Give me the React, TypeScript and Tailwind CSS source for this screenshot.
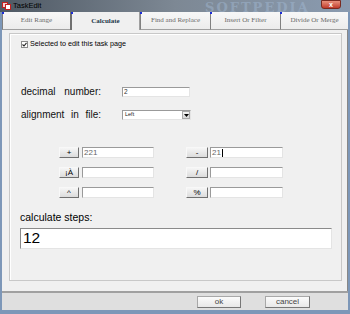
import React from "react";

const tabs = [
  { label: "Edit Range", w: "w-[68px]" },
  { label: "Calculate", w: "w-[70px]", active: true },
  { label: "Find and Replace", w: "w-[70px]" },
  { label: "Insert Or Filter", w: "w-[70px]" },
  { label: "Divide Or Merge", w: "w-[68px]" },
];

function SmallButton({ label, w }: { label: string; w: string }) {
  return (
    <div
      className={`${w} h-[11px] flex items-center justify-center border border-t-[#f8f8f8] border-l-[#f8f8f8] border-r-[#707070] border-b-[#707070] bg-gradient-to-b from-[#f6f6f6] to-[#dcdcdc] text-[8px] leading-none text-black`}
    >
      {label}
    </div>
  );
}

function Field({ value, w, caret }: { value?: string; w: string; caret?: boolean }) {
  return (
    <div
      className={`${w} h-[11px] flex items-center bg-white border border-t-[#9a9a9a] border-l-[#9a9a9a] border-r-[#e4e4e4] border-b-[#e4e4e4] pl-[1px] text-[8px] leading-none text-[#666]`}
    >
      {value}
      {caret && <div className="ml-[1px] w-px h-[8px] bg-black" />}
    </div>
  );
}

function CalcRow({
  left,
  leftValue,
  right,
  rightValue,
}: {
  left: string;
  leftValue?: string;
  right: string;
  rightValue?: string;
}) {
  return (
    <div className="flex items-center h-[11px]">
      <div className="ml-[39px]">
        <SmallButton label={left} w="w-[20px]" />
      </div>
      <div className="ml-[3px]">
        <Field value={leftValue} w="w-[72px]" />
      </div>
      <div className="ml-[32px]">
        <SmallButton label={right} w="w-[22px]" />
      </div>
      <div className="ml-[2px]">
        <Field value={rightValue} w="w-[73px]" caret={!!rightValue} />
      </div>
    </div>
  );
}

export default function App() {
  return (
    <div className="w-[350px] h-[314px] flex flex-col bg-[#7d97b8] font-['Liberation_Sans',Arial,sans-serif] overflow-hidden">
      {/* title bar */}
      <div className="relative h-[12px] flex items-center bg-gradient-to-r from-[#4f5964] via-[#7d8894] to-[#8a9bb0]">
        <div className="ml-[2px] w-[9px] h-[8px] relative">
          <div className="absolute left-0 top-0 w-[6px] h-[6px] border border-[#c02020] bg-[#f6d0d0]" />
          <div className="absolute left-[3px] top-[2px] w-[6px] h-[6px] border border-[#c02020] bg-white" />
        </div>
        <span className="ml-[2px] text-[7.5px] leading-none text-black">TaskEdit</span>
        <span className="absolute left-[205px] top-[-2px] text-[13px] font-bold tracking-[2px] text-[#a8c0dc] opacity-40 font-['DejaVu_Serif',serif]">
          SOFTPEDIA
        </span>
        <div className="absolute right-[9px] top-0 w-[20px] h-[9px] rounded-b-[3px] bg-gradient-to-b from-[#e9907c] to-[#c0392b] border border-[#7a2a20] flex items-center justify-center text-white text-[7px] font-bold leading-none">
          x
        </div>
      </div>

      {/* window body */}
      <div className="flex-1 mx-[2px] flex flex-col bg-[#f0f0f0]">
        {/* tabs */}
        <div className="h-[18px] flex bg-[#f0f0f0]">
          {tabs.map((t) => (
            <div
              key={t.label}
              className={`${t.w} relative flex items-center justify-center font-['Liberation_Serif',serif] text-[7px] leading-none ${
                t.active
                  ? "font-bold text-[#23384a] border-l-2 border-l-[#707070] border-r border-r-[#a0a0a0] bg-[#f0f0f0]"
                  : "text-[#6a6a6a] border-l border-l-[#808080] border-b border-b-[#a0a0a0] bg-gradient-to-b from-[#f7f7f7] to-[#ececec]"
              }`}
            >
              <div className="absolute left-[-1px] top-0 w-[2px] h-[2px] bg-[#1c2cd8]" />
              {t.label}
            </div>
          ))}
        </div>

        {/* tab page */}
        <div className="flex-1 border-r border-r-[#888] pt-[3px] pl-[7px]">
          <div className="w-[333px] h-[248px] border border-[#c8c8c8] shadow-[inset_1px_1px_0_#fff] flex flex-col pl-[10px]">
            <div className="mt-[6px] ml-[1px] flex items-center h-[8px]">
              <div className="w-[7px] h-[7px] border border-[#8a8a8a] bg-white flex items-center justify-center">
                <svg width="5" height="5" viewBox="0 0 5 5">
                  <path d="M0.5 2.5 L2 4 L4.5 0.8" stroke="#222" strokeWidth="1.1" fill="none" />
                </svg>
              </div>
              <span className="ml-[2px] text-[7.2px] leading-none text-black">
                Selected to edit this task page
              </span>
            </div>

            <div className="mt-[39px] flex items-center h-[10px]">
              <div className="w-[80px] ml-[1px] flex justify-between text-[10px] leading-none text-[#111]">
                <span>decimal</span>
                <span>number:</span>
              </div>
              <div className="ml-[21px] w-[68px] h-[10px] bg-white border border-t-[#9a9a9a] border-l-[#9a9a9a] border-r-[#e4e4e4] border-b-[#e4e4e4] pl-[1px] text-[6.5px] leading-[8px] text-[#333]">
                2
              </div>
            </div>

            <div className="mt-[13px] flex items-center h-[10px]">
              <div className="w-[80px] ml-[1px] flex justify-between text-[10px] leading-none text-[#111]">
                <span>alignment</span>
                <span>in</span>
                <span>file:</span>
              </div>
              <div className="ml-[21px] w-[69px] h-[10px] bg-white border border-t-[#9a9a9a] border-l-[#9a9a9a] border-r-[#e4e4e4] border-b-[#e4e4e4] flex items-center">
                <span className="flex-1 pl-[2px] text-[5.5px] leading-none text-[#222]">Left</span>
                <div className="w-[8px] h-[8px] bg-gradient-to-b from-[#f4f4f4] to-[#d8d8d8] border border-[#a8a8a8] flex items-center justify-center">
                  <svg width="5" height="3" viewBox="0 0 5 3">
                    <path d="M0 0 H5 L2.5 3 Z" fill="#000" />
                  </svg>
                </div>
              </div>
            </div>

            <div className="mt-[27px] flex flex-col gap-[9px]">
              <CalcRow left="+" leftValue="221" right="-" rightValue="21" />
              <CalcRow left="¡À" right="/" />
              <CalcRow left="^" right="%" />
            </div>

            <div className="mt-[14px] text-[10.5px] leading-none text-black">calculate steps:</div>
            <div className="mt-[5px] w-[312px] h-[21px] bg-white border border-t-[#8a8a8a] border-l-[#8a8a8a] border-r-[#e4e4e4] border-b-[#e4e4e4] flex items-center pl-[2px] text-[15.5px] leading-none text-black">
              12
            </div>
          </div>
        </div>

        {/* bottom bar */}
        <div className="h-[19px] border-t-2 border-t-[#a0a0a0] bg-[#dfdfdf] flex items-center">
          <div className="ml-[195px] w-[44px] h-[12px] border border-[#a8a8a8] border-r-[#777] border-b-[#777] bg-gradient-to-b from-[#fbfbfb] to-[#e8e8e8] flex items-center justify-center text-[8px] leading-none text-[#444]">
            ok
          </div>
          <div className="ml-[24px] w-[45px] h-[12px] border border-[#a8a8a8] border-r-[#777] border-b-[#777] bg-gradient-to-b from-[#fbfbfb] to-[#e8e8e8] flex items-center justify-center text-[8px] leading-none text-[#444]">
            cancel
          </div>
        </div>
      </div>
      <div className="h-[4px]" />
    </div>
  );
}
